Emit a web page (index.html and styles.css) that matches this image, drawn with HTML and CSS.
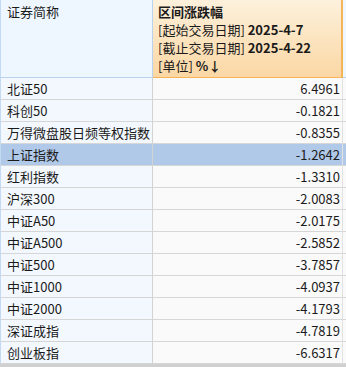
FILE: index.html
```html
<!DOCTYPE html>
<html lang="zh">
<head>
<meta charset="utf-8">
<link rel="stylesheet" href="styles.css">
</head>
<body>
<div class="sheet">
  <div class="head">
    <div class="hcell name-h">证券简称</div>
    <div class="hcell val-h">
      <div class="hl"><b>区间涨跌幅</b></div>
      <div class="hl">[起始交易日期] <b>2025-4-7</b></div>
      <div class="hl">[截止交易日期] <b>2025-4-22</b></div>
      <div class="hl">[单位] <b>%↓</b></div>
    </div>
    <div class="tail-h"></div>
  </div>
  <div class="row"><div class="name">北证50</div><div class="val">6.4961</div><div class="tail"></div></div>
  <div class="row"><div class="name">科创50</div><div class="val">-0.1821</div><div class="tail"></div></div>
  <div class="row"><div class="name">万得微盘股日频等权指数</div><div class="val">-0.8355</div><div class="tail"></div></div>
  <div class="row sel"><div class="name">上证指数</div><div class="val">-1.2642</div><div class="tail"></div></div>
  <div class="row"><div class="name">红利指数</div><div class="val">-1.3310</div><div class="tail"></div></div>
  <div class="row"><div class="name">沪深300</div><div class="val">-2.0083</div><div class="tail"></div></div>
  <div class="row"><div class="name">中证A50</div><div class="val">-2.0175</div><div class="tail"></div></div>
  <div class="row"><div class="name">中证A500</div><div class="val">-2.5852</div><div class="tail"></div></div>
  <div class="row"><div class="name">中证500</div><div class="val">-3.7857</div><div class="tail"></div></div>
  <div class="row"><div class="name">中证1000</div><div class="val">-4.0937</div><div class="tail"></div></div>
  <div class="row"><div class="name">中证2000</div><div class="val">-4.1793</div><div class="tail"></div></div>
  <div class="row"><div class="name">深证成指</div><div class="val">-4.7819</div><div class="tail"></div></div>
  <div class="row"><div class="name">创业板指</div><div class="val">-6.6317</div><div class="tail"></div></div>
  <div class="foot"></div>
</div>
</body>
</html>
```
FILE: styles.css
```css
html, body {
  margin: 0;
  padding: 0;
  background: #ffffff;
}
.sheet {
  width: 346px;
  height: 367px;
  overflow: hidden;
  font-family: "Noto Sans CJK SC", "Noto Sans", sans-serif;
  font-size: 13px;
  color: #1a1a1a;
}
.head {
  display: grid;
  grid-template-columns: 153px 190px 3px;
  height: 78px;
}
.hcell {
  box-sizing: border-box;
}
.name-h {
  background: #eef6ff;
  border-left: 1px solid #c4daf2;
  border-right: 1px solid #b9d2ee;
  border-bottom: 1px solid #b9d2ee;
  padding: 3px 0 0 6px;
  line-height: 18px;
}
.val-h {
  background: linear-gradient(#fdf1dc, #fbd7a4);
  border-right: 2px solid #f6b458;
  border-bottom: 1px solid #f6b458;
  padding: 3px 0 0 5px;
}
.hl {
  line-height: 18px;
  white-space: nowrap;
}
.hl b {
  font-weight: 700;
}
.tail-h {
  background: #eef6ff;
  border-bottom: 1px solid #b9d2ee;
}
.row {
  display: grid;
  grid-template-columns: 153px 190px 3px;
  height: 22px;
}
.name {
  box-sizing: border-box;
  background: #f3f8fe;
  border-left: 1px solid #c4daf2;
  border-right: 1px solid #d2d2d2;
  border-bottom: 1px solid #d6d6d6;
  padding-left: 6px;
  line-height: 21px;
  white-space: nowrap;
}
.val {
  box-sizing: border-box;
  background: #fafafa;
  border-right: 1px solid #e2e2e2;
  border-bottom: 1px solid #d6d6d6;
  padding-right: 2px;
  text-align: right;
  line-height: 21px;
}
.tail {
  background: #fafafa;
  border-bottom: 1px solid #d6d6d6;
}
.sel .name,
.sel .val,
.sel .tail {
  background: #b1c9e8;
}
.foot {
  height: 3px;
  background: #d0d0d0;
}
```
